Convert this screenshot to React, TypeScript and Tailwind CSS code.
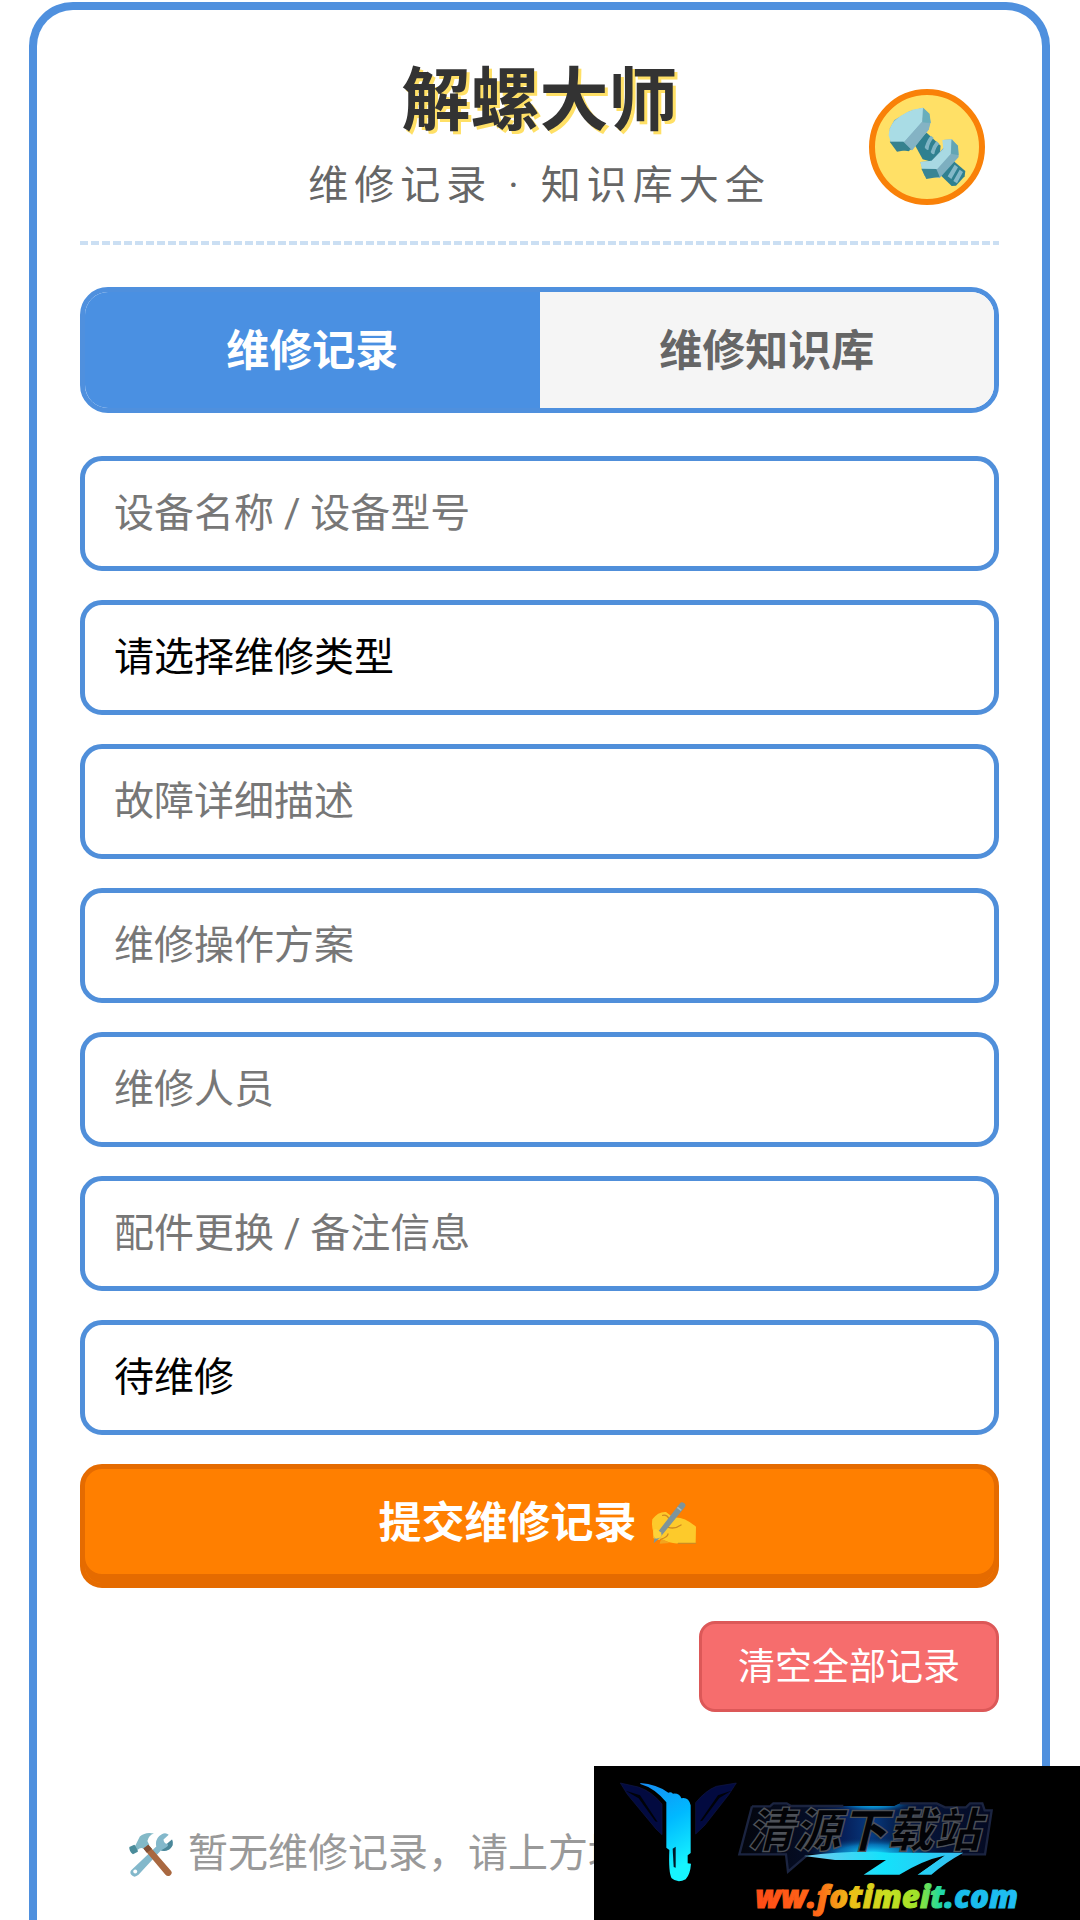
import React, { useState } from "react";

const FIELD =
  "block h-[115px] w-full appearance-none rounded-[22px] border-5 border-[#508fda] bg-white px-[29px] text-[40px] leading-[60px] text-black outline-none placeholder:text-[#777777] placeholder:opacity-100";

function BoltIcon() {
  return (
    <svg viewBox="0 0 346 348" className="size-full" aria-hidden="true">
      <path d="M130 156 L172 131 L214 170 L211 196 L186 218 L160 211 Z" fill="#2f8090" />
      <path d="M166 175 q8 -26 19 -35 l8 7 q-13 13 -16 36 q-7 2 -11 -8z M184 189 q5 -19 17 -33 l9 8 q-12 12 -15 31 q-6 3 -11 -6z" fill="#7fb5c5" />
      <path d="M61 123 L83 181 L118 187 L137 171 L126 140 Z" fill="#2f8090" />
      <path d="M61 119 L75 93 L120 67 L161 56 L178 73 L184 100 L178 122 L127 184 L63 160 Z" fill="#7fb1c1" />
      <path d="M58 139 Q59 115 75 96 Q112 61 161 56 L158 99 L105 158 L64 158 Z" fill="#a9dce5" />
      <path d="M162 57 L181 75 L184 101 L160 101 Z" fill="#69aebb" />
      <path d="M61 158 L102 158 L125 181 L83 188 Z" fill="#36818e" />
      <path d="M105 159 L157 100 L180 103 L179 120 L129 184 Z" fill="#84b3c4" />
      <path d="M206 251 L250 214 L288 246 L286 262 L260 290 L247 291 Z" fill="#2f8090" />
      <path d="M235 262 l21 -35 10 8 -20 35z M252 276 l19 -34 10 7 -18 34z" fill="#83b8c8" />
      <path d="M153 219 L187 215 L224 175 L221 153 L248 151 L265 170 L268 204 L211 267 L165 260 Z" fill="#7dafc0" />
      <path d="M153 219 L187 215 L222 180 L219 153 L247 151 L244 195 L203 241 L158 240 Z" fill="#a8d9e3" />
      <path d="M247 152 L266 170 L268 199 L245 194 Z" fill="#63a5b4" />
      <path d="M156 239 L201 240 L211 263 L171 270 Z" fill="#398594" />
    </svg>
  );
}

function WritingHandIcon() {
  return (
    <svg viewBox="0 0 138 132" className="h-[44px] w-[46px]" aria-hidden="true">
      <path d="M4 55 Q22 31 45 33 L67 50 Q98 46 135 77 L134 127 L84 127 Q58 129 32 115 Q14 121 7 111 L7 94 Q1 74 4 55Z" fill="#fdca2b" />
      <path d="M25 92 Q38 77 52 79 Q72 85 90 72 M29 115 Q50 108 51 99 M35 43 Q48 40 53 52 M82 127 H134" fill="none" stroke="#d08a21" strokeWidth="4" strokeLinecap="round" />
      <path d="M8 127 L12 104 L86 8 Q91 1 99 6 Q107 11 101 19 L26 111 Z" fill="#7d949b" />
      <path d="M79 19 L91 28" stroke="#a7bcc2" strokeWidth="5" />
      <path d="M7 91 Q10 81 17 85 L29 94 Q36 105 25 111 L14 113 Q6 107 7 91Z" fill="#fdd23a" />
      <path d="M26 128 q3 -18 15 -10 q9 5 15 8z" fill="#f2a41f" />
    </svg>
  );
}

function ToolsIcon() {
  return (
    <svg viewBox="24 18 140 142" className="h-[47px] w-[46px]" aria-hidden="true">
      <path d="M33 138 L110 65 Q105 39 127 27 Q139 21 148 29 L132 43 Q133 55 143 56 L158 43 Q164 62 149 74 Q139 80 124 77 L56 151 Q43 162 34 151 Q29 144 33 138Z" fill="#83b8cb" />
      <path d="M124 77 Q149 83 160 61 Q162 52 158 43 L143 56 Q151 61 137 69Z" fill="#4b8799" />
      <circle cx="46" cy="141" r="6" fill="#ffffff" />
      <path d="M28 66 L43 59 L52 66 L54 81 L39 88 Q27 79 28 66Z" fill="#4a8c9a" />
      <path d="M46 62 L60 34 Q77 19 103 25 Q87 30 83 48 L89 60 L76 75 Q65 64 53 75Z" fill="#83b9c7" />
      <path d="M71 71 L86 59 L154 138 Q161 145 153 152 Q145 158 138 151Z" fill="#a96840" />
      <path d="M71 71 L86 59 L97 72 L81 84Z" fill="#825035" />
    </svg>
  );
}

function SiteMark() {
  return (
    <svg viewBox="12 18 1458 462" className="block w-full" role="img" aria-label="清源下载站 ww.fotimeit.com">
      <defs>
        <linearGradient id="torch" x1="0" y1="0" x2="0.3" y2="1">
          <stop offset="0" stopColor="#168bf3" />
          <stop offset="0.5" stopColor="#00b9ff" />
          <stop offset="1" stopColor="#16f4ff" />
        </linearGradient>
        <linearGradient id="plate" x1="0" y1="0" x2="1" y2="0">
          <stop offset="0" stopColor="#03050b" />
          <stop offset="0.28" stopColor="#050d26" />
          <stop offset="0.42" stopColor="#06215c" />
          <stop offset="0.52" stopColor="#063a80" />
          <stop offset="0.64" stopColor="#06173f" />
          <stop offset="1" stopColor="#040920" />
        </linearGradient>
        <radialGradient id="glow">
          <stop offset="0" stopColor="#16dcff" />
          <stop offset="0.5" stopColor="#078fd5" stopOpacity="0.7" />
          <stop offset="1" stopColor="#041b50" stopOpacity="0" />
        </radialGradient>
        <linearGradient id="swoosh" x1="0" y1="0" x2="1" y2="0">
          <stop offset="0" stopColor="#74c7ed" />
          <stop offset="0.5" stopColor="#13e2fb" />
          <stop offset="1" stopColor="#37bdf0" />
        </linearGradient>
        <linearGradient id="rainbow" x1="0" y1="0" x2="1" y2="0">
          <stop offset="0" stopColor="#ff4b16" />
          <stop offset="0.24" stopColor="#ff6818" />
          <stop offset="0.36" stopColor="#efbd16" />
          <stop offset="0.5" stopColor="#c9df20" />
          <stop offset="0.62" stopColor="#9ce32b" />
          <stop offset="0.7" stopColor="#23dc9b" />
          <stop offset="0.76" stopColor="#17bce9" />
          <stop offset="1" stopColor="#20bdf4" />
        </linearGradient>
        <clipPath id="plateClip">
          <path d="M486 139 H540 L550 130 H590 L603 138 H913 L930 130 H1040 L1065 142 L1128 142 L1140 130 H1177 L1184 151 H1205 L1185 283 H655 L594 335 L588 283 H448 Z" />
        </clipPath>
      </defs>
      <g fill="#020a40" stroke="#101746" strokeWidth="2">
        <path d="M91 69 L145 81 Q185 94 216 132 V224 L198 207 L112 103Z" />
        <path d="M439 69 L379 79 Q346 92 317 128 V222 L345 195 L417 103Z" />
      </g>
      <path d="M107 92 L150 106 L203 186 L196 184 L146 115Z M424 92 L384 106 L330 184 L337 182 L388 114Z" fill="#000207" />
      <path d="M151 69 Q199 72 235 98 Q242 94 249 101 Q269 99 274 115 Q296 110 302 136 V279 L293 286 V310 L303 311 Q301 342 287 358 Q263 371 245 355 Q235 337 238 270 L229 263 V127 Q194 84 151 72Z" fill="url(#torch)" />
      <path d="M248 266 L257 260 V323 L251 321Z" fill="#001829" />
      <g clipPath="url(#plateClip)">
        <rect x="440" y="125" width="780" height="215" fill="url(#plate)" />
        <ellipse cx="850" cy="130" rx="130" ry="30" fill="url(#glow)" />
        <ellipse cx="850" cy="278" rx="205" ry="48" fill="url(#glow)" />
      </g>
      <path d="M486 139 H540 L550 130 H590 L603 138 H760 M930 130 H1040 L1065 142 H1128 L1140 130 H1177 L1184 151 H1205 L1185 283 H1115 M650 287 L594 335 L588 283 H448 L486 139" fill="none" stroke="#1b2440" strokeWidth="7" />
      <path d="M642 288 Q790 270 900 278 H1120 Q1065 308 1024 344 H982 L1062 287 Q1000 300 928 344 H821 L888 300 H735Z" fill="url(#swoosh)" />
      <path d="M1065 286 Q1009 310 963 344 H982Z" fill="#000000" />
      <text x="472" y="262" fontFamily="'Noto Sans CJK SC', sans-serif" fontWeight="900" fontStyle="italic" fontSize="140" fill="#020307" stroke="#4d5158" strokeWidth="4">
        清源下载站
      </text>
      <text x="496" y="445" fontFamily="'Open Sans', sans-serif" fontWeight="800" fontStyle="italic" fontSize="94" fill="url(#rainbow)" stroke="url(#rainbow)" strokeWidth="3">
        ww.fotimeit.com
      </text>
    </svg>
  );
}

export default function App() {
  const [tab, setTab] = useState<"records" | "knowledge">("records");
  const tabClass = (active: boolean) =>
    active
      ? "flex-1 bg-[#4a90e2] pt-[2px] text-[43px] leading-[64px] font-bold text-white"
      : "flex-1 bg-[#f5f5f5] pt-[2px] text-[43px] leading-[64px] font-bold text-[#666666]";

  return (
    <div className="flex min-h-screen flex-col bg-white pr-[30px] pl-[29px] pt-[2px] font-[Roboto,'Noto_Sans_CJK_SC',sans-serif]">
      <main className="flex-1 rounded-t-[44px] border-8 border-b-0 border-[#4f90de] bg-white px-[43px] pt-[52px]">
        <header className="relative text-center">
          <h1 className="text-[69px] leading-[80px] font-bold text-[#333333] [text-shadow:3px_3px_0_#ffe066]">解螺大师</h1>
          <p className="mt-[14px] text-[40px] leading-[60px] tracking-[6px] text-[#666666]">维修记录 · 知识库大全</p>
          <div className="absolute top-[27px] right-[14px] size-[116px] overflow-hidden rounded-full border-6 border-[#f98108] bg-[#ffe066]">
            <div className="-m-[6px] size-[116px]">
              <BoltIcon />
            </div>
          </div>
          <div className="mt-[25px] h-[4px] bg-[repeating-linear-gradient(90deg,#cbdff3_0_8px,transparent_8px_11px)]" />
        </header>

        <nav role="tablist" className="mt-[42px] flex h-[126px] overflow-hidden rounded-[28px] border-5 border-[#4f90de]">
          <button type="button" role="tab" aria-selected={tab === "records"} onClick={() => setTab("records")} className={tabClass(tab === "records")}>
            维修记录
          </button>
          <button type="button" role="tab" aria-selected={tab === "knowledge"} onClick={() => setTab("knowledge")} className={tabClass(tab === "knowledge")}>
            维修知识库
          </button>
        </nav>

        <form className="mt-[43px] flex flex-col gap-[29px]" onSubmit={(e) => e.preventDefault()}>
          <input className={FIELD} aria-label="设备名称 / 设备型号" placeholder="设备名称 / 设备型号" />
          <select className={FIELD} aria-label="维修类型" defaultValue="">
            <option value="">请选择维修类型</option>
          </select>
          <input className={FIELD} aria-label="故障详细描述" placeholder="故障详细描述" />
          <input className={FIELD} aria-label="维修操作方案" placeholder="维修操作方案" />
          <input className={FIELD} aria-label="维修人员" placeholder="维修人员" />
          <input className={FIELD} aria-label="配件更换 / 备注信息" placeholder="配件更换 / 备注信息" />
          <select className={FIELD} aria-label="维修状态" defaultValue="待维修">
            <option>待维修</option>
          </select>
          <button
            type="submit"
            className="flex h-[124px] w-full items-center justify-center gap-[14px] rounded-[22px] border-5 border-[#e56b00] bg-[#ff7f00] pr-[4px] pb-[6px] text-[43px] leading-[64px] font-bold text-white shadow-[inset_0_-9px_0_#e56b00]"
          >
            提交维修记录
            <WritingHandIcon />
          </button>
        </form>

        <div className="mt-[33px] flex justify-end">
          <button type="button" className="h-[91px] rounded-[16px] border-3 border-[#dc5858] bg-[#f66d6d] px-[36px] pt-[2px] text-[37px] leading-[56px] text-white">
            清空全部记录
          </button>
        </div>

        <p className="mt-[112px] flex items-center gap-[14px] pb-6 pl-[48px] text-[40px] leading-[60px] whitespace-nowrap text-[#999999]">
          <ToolsIcon />
          暂无维修记录，请上方填
        </p>
      </main>

      <aside className="fixed right-0 bottom-0 w-[45%] bg-black">
        <SiteMark />
      </aside>
    </div>
  );
}
